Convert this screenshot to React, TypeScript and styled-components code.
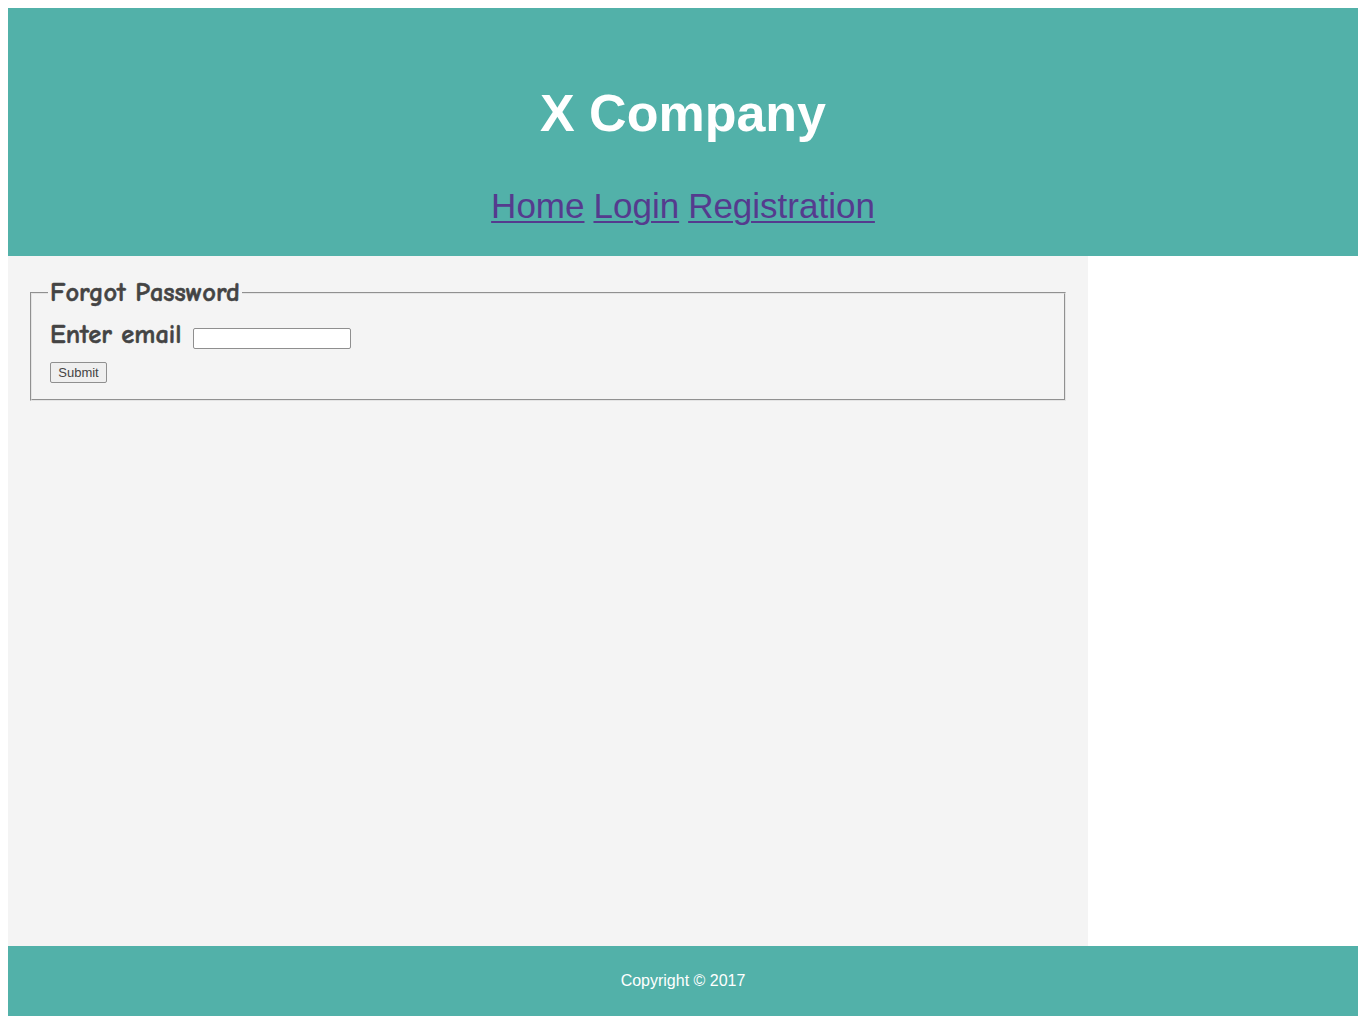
import React from "react";
import styled, { createGlobalStyle } from "styled-components";

const Global = createGlobalStyle`
  html, body { margin: 0; padding: 0; }
  body {
    margin: 8px;
    background: #ffffff;
    font-family: "Liberation Sans", Arial, sans-serif;
  }
`;

const Page = styled.div`
  display: flex;
  flex-direction: column;
`;

const Header = styled.header`
  background: #52b1a9;
  height: 248px;
  box-sizing: border-box;
  padding-top: 75px;
  display: flex;
  flex-direction: column;
  align-items: center;
`;

const Title = styled.h1`
  margin: 0;
  font-family: "Liberation Sans", Arial, sans-serif;
  font-weight: bold;
  font-size: 52px;
  line-height: 60px;
  color: #ffffff;
`;

const Nav = styled.nav`
  margin-top: 43px;
  display: flex;
  gap: 9px;
  font-size: 35px;
  line-height: 40px;
`;

const NavLink = styled.a`
  color: #553b8e;
  text-decoration: underline;
  text-decoration-thickness: 2px;
  text-underline-offset: 3px;
`;

const Body = styled.div`
  display: flex;
`;

const Main = styled.main`
  width: 80%;
  height: 690px;
  background: #f4f4f4;
  box-sizing: border-box;
  padding: 20px 20px;
`;

const Aside = styled.aside`
  flex: 1;
  background: #ffffff;
`;

const Fieldset = styled.fieldset`
  margin: 0 2px;
  padding: 0 18px 16px 18px;
  border: 2px groove #e4e4e4;
  font-family: "Comic Sans MS", "Comic Neue", "DejaVu Sans Condensed", sans-serif;
  color: #444444;
`;

const Legend = styled.legend`
  padding: 0 2px;
  font-size: 26.5px;
  font-weight: bold;
  line-height: 34px;
  margin-left: -2px;
  -webkit-text-stroke: 0.5px #444444;
`;

const Row = styled.div`
  display: flex;
  align-items: center;
  gap: 10px;
  margin-top: 8px;
`;

const Label = styled.label`
  font-size: 26.5px;
  font-weight: bold;
  line-height: 34px;
  -webkit-text-stroke: 0.5px #444444;
`;

const Input = styled.input`
  width: 158px;
  height: 21px;
  box-sizing: border-box;
  border: 1px solid #8f8f8f;
  border-radius: 2px;
  background: #ffffff;
  margin-top: 6px;
  margin-left: 1px;
  padding: 0 3px;
`;

const Button = styled.button`
  margin-top: 10px;
  height: 21px;
  width: 57px;
  box-sizing: border-box;
  padding: 0;
  font-family: "Liberation Sans", Arial, sans-serif;
  font-size: 13px;
  color: #444444;
  background: #efefef;
  border: 1px solid #8f8f8f;
  border-radius: 2px;
  display: block;
`;

const Footer = styled.footer`
  background: #52b1a9;
  height: 70px;
  display: flex;
  align-items: center;
  justify-content: center;
  color: #ffffff;
  font-size: 16px;
  font-family: "Liberation Sans", Arial, sans-serif;
`;

export default function App() {
  return (
    <>
      <Global />
      <Page>
        <Header>
          <Title>X Company</Title>
          <Nav>
            <NavLink href="#">Home</NavLink>
            <NavLink href="#">Login</NavLink>
            <NavLink href="#">Registration</NavLink>
          </Nav>
        </Header>
        <Body>
          <Main>
            <form onSubmit={(e) => e.preventDefault()}>
              <Fieldset>
                <Legend>Forgot Password</Legend>
                <Row>
                  <Label htmlFor="email">Enter email</Label>
                  <Input id="email" type="text" />
                </Row>
                <Button type="submit">Submit</Button>
              </Fieldset>
            </form>
          </Main>
          <Aside />
        </Body>
        <Footer>Copyright © 2017</Footer>
      </Page>
    </>
  );
}
